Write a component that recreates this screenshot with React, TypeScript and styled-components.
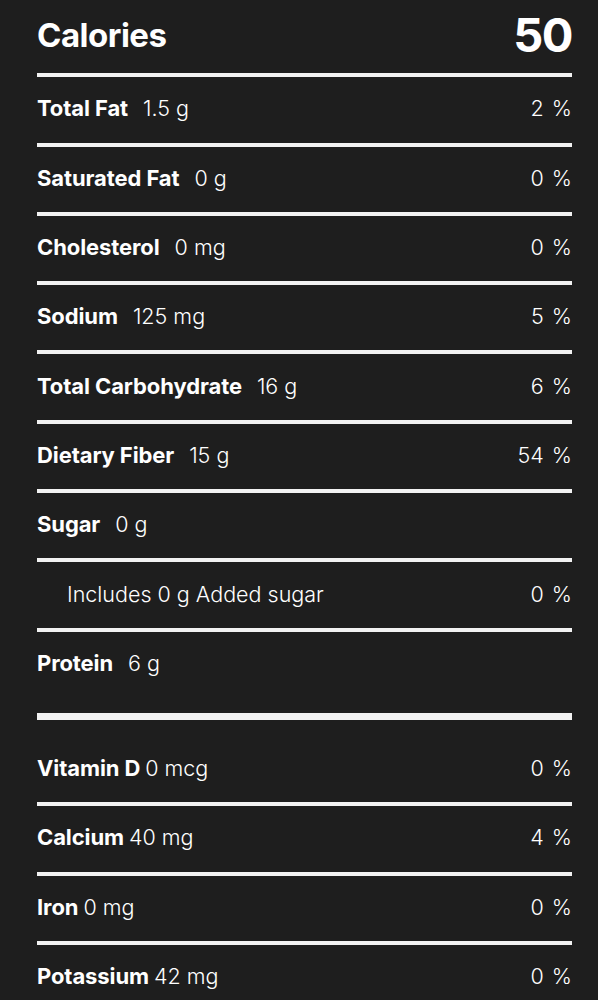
import React from "react";
import styled, { createGlobalStyle } from "styled-components";

type Nutrient = {
  label: string;
  amount: string;
  percent?: string;
  tight?: boolean;
  sub?: boolean;
};

const macros: Nutrient[] = [
  { label: "Total Fat", amount: "1.5 g", percent: "2 %" },
  { label: "Saturated Fat", amount: "0 g", percent: "0 %" },
  { label: "Cholesterol", amount: "0 mg", percent: "0 %" },
  { label: "Sodium", amount: "125 mg", percent: "5 %" },
  { label: "Total Carbohydrate", amount: "16 g", percent: "6 %" },
  { label: "Dietary Fiber", amount: "15 g", percent: "54 %" },
  { label: "Sugar", amount: "0 g" },
  { label: "", amount: "Includes 0 g Added sugar", percent: "0 %", sub: true },
  { label: "Protein", amount: "6 g" },
];

const micros: Nutrient[] = [
  { label: "Vitamin D", amount: "0 mcg", percent: "0 %", tight: true },
  { label: "Calcium", amount: "40 mg", percent: "4 %", tight: true },
  { label: "Iron", amount: "0 mg", percent: "0 %", tight: true },
  { label: "Potassium", amount: "42 mg", percent: "0 %", tight: true },
];

const NutrientRow = ({ item }: { item: Nutrient }) => (
  <Row>
    <Left $sub={item.sub} $tight={item.tight}>
      {item.label && <Label>{item.label}</Label>}
      <Amount>{item.amount}</Amount>
    </Left>
    {item.percent && <Percent>{item.percent}</Percent>}
  </Row>
);

export default function App() {
  return (
    <>
      <GlobalStyle />
      <Wrapper>
        <Header>
          <Title>Calories</Title>
          <Total>50</Total>
        </Header>
        {macros.map((m, i) => (
          <NutrientRow key={i} item={m} />
        ))}
        <ThickRule />
        <Micros>
          {micros.map((m, i) => (
            <NutrientRow key={i} item={m} />
          ))}
        </Micros>
      </Wrapper>
    </>
  );
}

const GlobalStyle = createGlobalStyle`
  body {
    margin: 0;
    background: #1e1e1e;
    color: #ffffff;
    font-family: Inter, Roboto, "Liberation Sans", sans-serif;
  }
`;

const Wrapper = styled.div`
  padding: 0 26px 0 37px;
`;

const Header = styled.div`
  display: flex;
  align-items: center;
  justify-content: space-between;
  height: 73.3px;
  padding-bottom: 4px;
  box-sizing: border-box;
`;

const Title = styled.div`
  font-size: 33px;
  font-weight: 700;
  letter-spacing: -0.5px;
`;

const Total = styled.div`
  font-size: 47px;
  font-weight: 700;
  line-height: 1;
  letter-spacing: -1.5px;
`;

const Row = styled.div`
  display: flex;
  align-items: center;
  justify-content: space-between;
  height: 69.3px;
  padding-bottom: 3px;
  box-sizing: border-box;
  border-top: 4px solid #f2f2f2;
`;

const Micros = styled.div`
  padding-top: 16px;

  & > div:first-child {
    border-top: none;
    height: 66.3px;
  }
`;

const Left = styled.div<{ $sub?: boolean; $tight?: boolean }>`
  display: flex;
  align-items: baseline;
  gap: ${(p) => (p.$tight ? "5px" : "15px")};
  padding-left: ${(p) => (p.$sub ? "30px" : "0")};
`;

const Label = styled.span`
  font-size: 22px;
  font-weight: 700;
  letter-spacing: -0.1px;
`;

const Amount = styled.span`
  font-size: 21.5px;
  font-weight: 300;
`;

const Percent = styled.span`
  font-size: 21.5px;
  font-weight: 300;
  word-spacing: 2px;
`;

const ThickRule = styled.div`
  height: 7px;
  background: #f2f2f2;
  margin-top: 16px;
`;
